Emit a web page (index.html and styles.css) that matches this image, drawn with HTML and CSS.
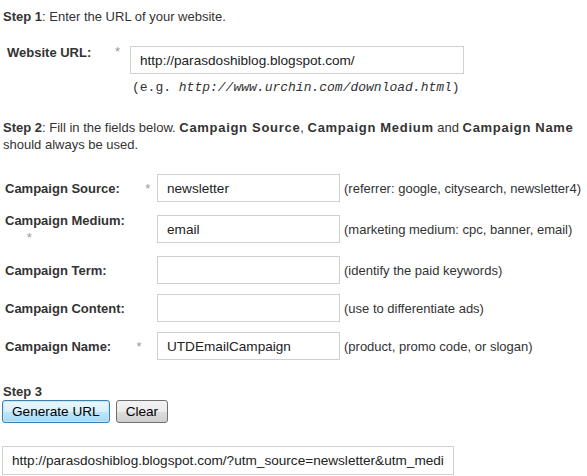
FILE: index.html
```html
<!DOCTYPE html>
<html lang="en">

<head>
  <meta charset="UTF-8">
  <meta name="viewport" content="width=device-width, initial-scale=1.0">
  <title>URL Builder</title>
  <link rel="stylesheet" href="styles.css">
</head>

<body>
  <div class="builder">
    <p class="step"><b>Step 1</b>: Enter the URL of your website.</p>

    <div class="site-row">
      <label class="site-label" for="site">Website URL:</label>
      <span class="req">*</span>
      <div class="site-field">
        <input class="text-input site-input" id="site" type="text" value="http://parasdoshiblog.blogspot.com/">
        <div class="hint">(e.g. <i>http://www.urchin.com/download.html</i>)</div>
      </div>
    </div>

    <p class="step"><b>Step 2</b>: Fill in the fields below. <b class="key">Campaign Source</b>, <b class="key">Campaign Medium</b> and <b class="key">Campaign Name</b> should always be used.</p>

    <div class="fields">
      <label class="field-label" for="src">Campaign Source: <span class="req">&nbsp;&nbsp;&nbsp;&nbsp;&nbsp;&nbsp;*</span></label>
      <input class="text-input" id="src" type="text" value="newsletter">
      <span class="help">(referrer: google, citysearch, newsletter4)</span>

      <label class="field-label" for="med">Campaign Medium: <span class="req">&nbsp;&nbsp;&nbsp;&nbsp;&nbsp;&nbsp;*</span></label>
      <input class="text-input" id="med" type="text" value="email">
      <span class="help">(marketing medium: cpc, banner, email)</span>

      <label class="field-label" for="term">Campaign Term:</label>
      <input class="text-input" id="term" type="text" value="">
      <span class="help">(identify the paid keywords)</span>

      <label class="field-label" for="content">Campaign Content:</label>
      <input class="text-input" id="content" type="text" value="">
      <span class="help">(use to differentiate ads)</span>

      <label class="field-label" for="name">Campaign Name: <span class="req">&nbsp;&nbsp;&nbsp;&nbsp;&nbsp;&nbsp;*</span></label>
      <input class="text-input" id="name" type="text" value="UTDEmailCampaign">
      <span class="help">(product, promo code, or slogan)</span>
    </div>

    <p class="step step3"><b>Step 3</b></p>
    <div class="actions">
      <button class="btn btn-default" type="button">Generate URL</button>
      <button class="btn" type="button">Clear</button>
    </div>

    <input class="text-input result" type="text" value="http://parasdoshiblog.blogspot.com/?utm_source=newsletter&amp;utm_medium=email&amp;utm_campaign=UTDEmailCampaign">
  </div>
</body>

</html>
```

FILE: styles.css
```css
* {
  margin: 0;
  padding: 0;
  box-sizing: border-box;
}

html,
body {
  width: 100%;
  height: 100%;
  background: #fff;
}

body {
  font-family: Arial, "Liberation Sans", sans-serif;
  font-size: 13px;
  line-height: 17px;
  color: #333;
  overflow: hidden;
}

.builder {
  padding: 8px 0 0 5px;
}

.step {
  margin-left: -2px;
}

.step b,
.field-label,
.site-label {
  font-weight: bold;
}

.step .key {
  letter-spacing: 0.7px;
}

.req {
  color: #999;
  font-weight: normal;
}

.text-input {
  display: block;
  height: 28px;
  padding: 0 9px;
  border: 1px solid #d0d0d0;
  background: #fff;
  font-family: Arial, "Liberation Sans", sans-serif;
  font-size: 13.6px;
  color: #222;
  outline: none;
}

/* step 1 */
.site-row {
  display: flex;
  align-items: flex-start;
  margin-top: 21px;
  padding-left: 2px;
}

.site-label {
  width: 108px;
  margin-top: -2px;
}

.site-row .req {
  width: 15px;
  margin-top: -3px;
}

.site-input {
  width: 334px;
}

.hint {
  margin-top: 5px;
  padding-left: 2px;
  font-family: "Courier New", "Liberation Mono", monospace;
  font-size: 13px;
}

.site-row + .step {
  margin-top: 23px;
}

/* step 2 */
.fields {
  display: grid;
  grid-template-columns: 148px 183px auto;
  column-gap: 4px;
  align-items: center;
  margin-top: 16px;
}

.fields > * {
  margin: 5px 0;
}

.help {
  white-space: nowrap;
}

/* step 3 */
.step3 {
  margin-top: 18px;
}

.actions {
  display: flex;
  gap: 6px;
  margin: 0 0 0 -3px;
}

.btn {
  height: 23px;
  padding: 0 9px;
  border: 1px solid #707070;
  border-radius: 3px;
  background: linear-gradient(#f2f2f2 0%, #ebebeb 50%, #dddddd 51%, #cfcfcf 100%);
  font-family: Arial, "Liberation Sans", sans-serif;
  font-size: 13.6px;
  color: #000;
}

.btn-default {
  border-color: #3c7fb1;
  background: linear-gradient(#eaf6fd 0%, #d9f0fc 50%, #bee6fd 51%, #a7d9f5 100%);
  box-shadow: inset 0 0 0 1px #c4e5f6;
}

.result {
  width: 452px;
  height: 29px;
  margin: 23px 0 0 -3px;
}
```
